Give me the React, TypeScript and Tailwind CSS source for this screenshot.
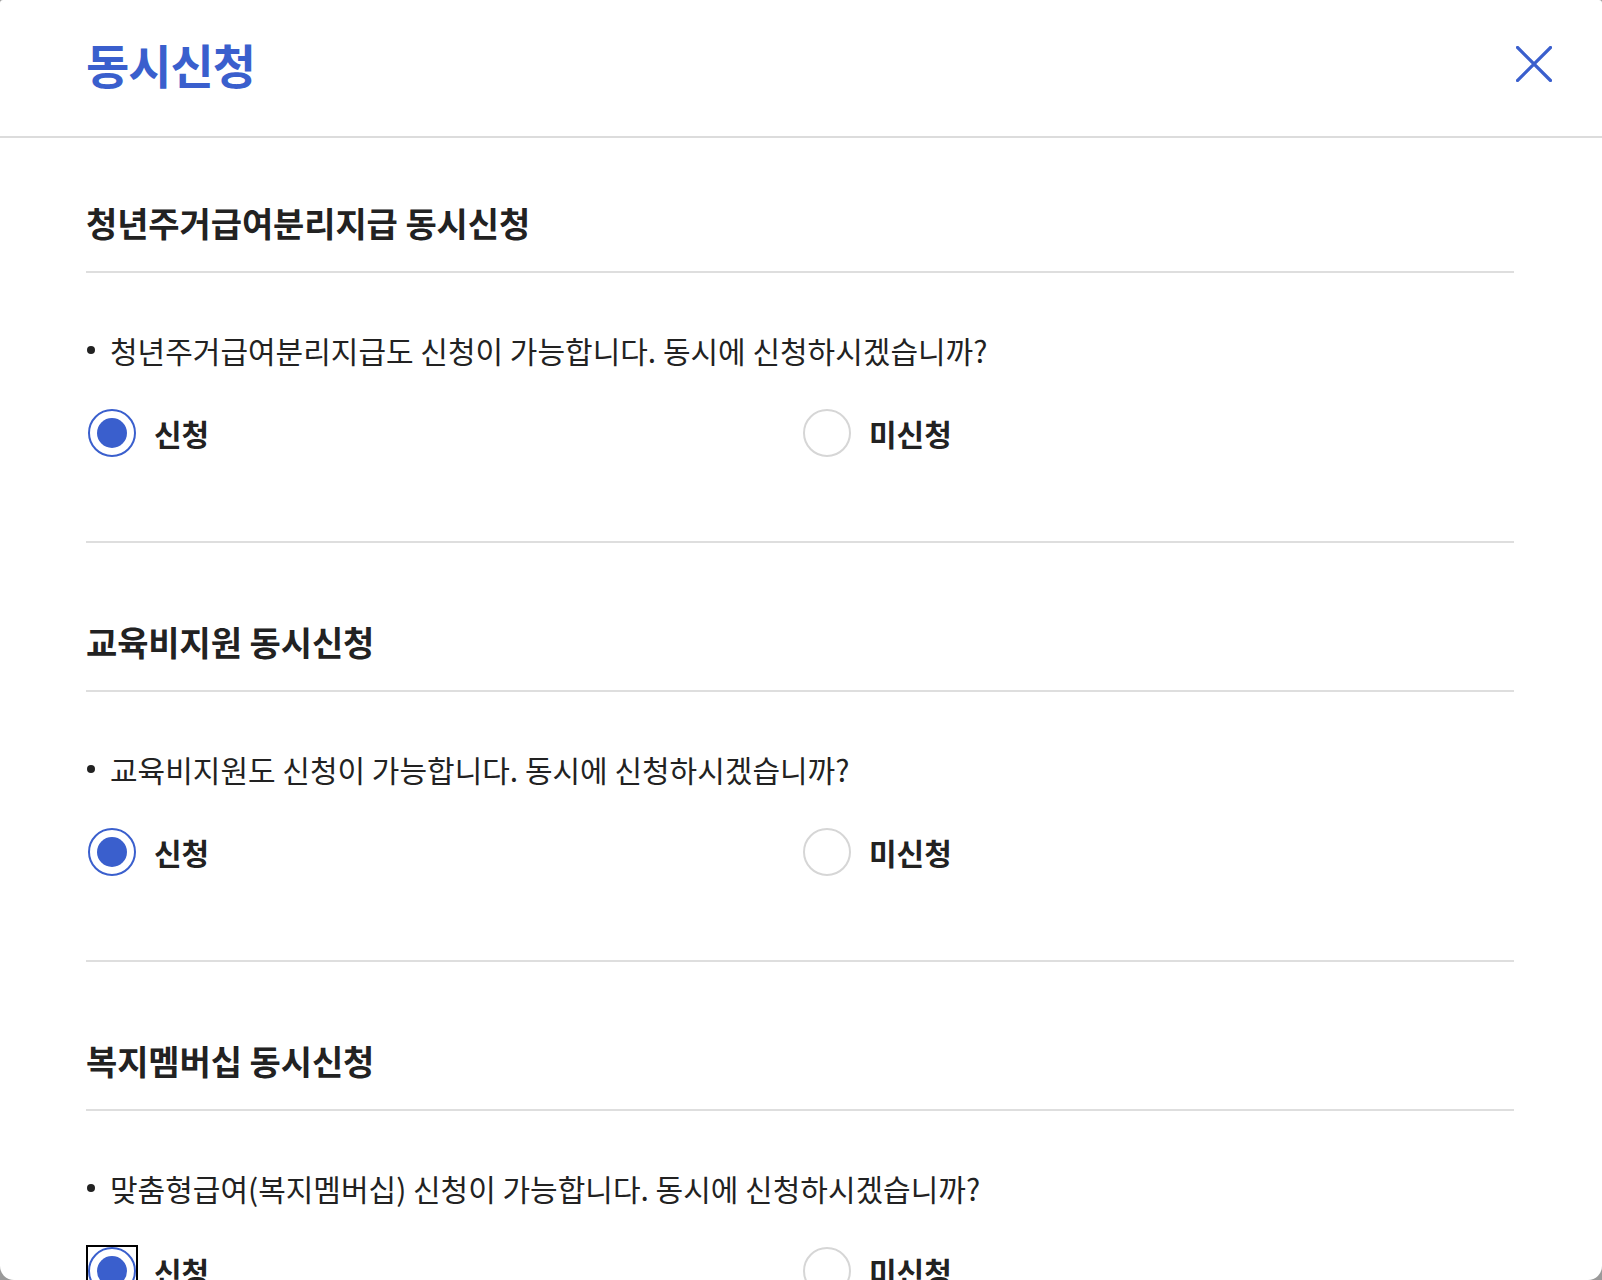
import React from "react";

const FONT = { fontFamily: '"Noto Sans CJK KR", "Noto Sans", sans-serif' };

function Radio({ checked, focused }: { checked: boolean; focused?: boolean }) {
  return (
    <span className="relative inline-flex shrink-0">
      {checked ? (
        <span className="w-[48px] h-[48px] rounded-full border-2 border-[#3a5fcd] flex items-center justify-center bg-white">
          <span className="w-[30px] h-[30px] rounded-full bg-[#3a5fcd]" />
        </span>
      ) : (
        <span className="w-[48px] h-[48px] rounded-full border-2 border-[#d6d6d6] bg-white" />
      )}
      {focused && <span className="absolute -left-[2px] -top-[2px] w-[52px] h-[52px] border-2 border-black" />}
    </span>
  );
}

function Section({
  title,
  desc,
  first,
  focused,
}: {
  title: string;
  desc: string;
  first?: boolean;
  focused?: boolean;
}) {
  return (
    <section className={first ? "pt-[61px]" : "pt-[75px]"}>
      <h2 className="text-[34px] leading-[48px] font-bold text-[#222] tracking-[-0.1px] pb-[24px] border-b-2 border-[#dedede]">
        {title}
      </h2>
      <div className="pb-[84px] border-b-2 border-[#dedede]">
        <p className="mt-[57px] flex items-center text-[30px] leading-[40px] text-[#222] tracking-[0px]">
          <span className="w-[8px] h-[8px] rounded-full bg-[#222] ml-[1px] mr-[15px] shrink-0" />
          {desc}
        </p>
        <div className="mt-[39px] grid grid-cols-2">
          <label className="flex items-center gap-[18px] pl-[2px]">
            <Radio checked focused={focused} />
            <span className="text-[30px] leading-[40px] font-bold text-[#222]">신청</span>
          </label>
          <label className="flex items-center gap-[18px] pl-[3px]">
            <Radio checked={false} />
            <span className="text-[30px] leading-[40px] font-bold text-[#222]">미신청</span>
          </label>
        </div>
      </div>
    </section>
  );
}

export default function App() {
  return (
    <div className="w-[1602px] h-[1280px] bg-[#9a9a9a] overflow-hidden" style={FONT}>
      <div className="h-[1280px] bg-white rounded-t-[3px] rounded-b-[14px] overflow-hidden">
        <header className="h-[138px] flex items-center justify-between pl-[86px] pr-[50px] pb-[8px] border-b-2 border-[#dcdcdc]">
          <h1 className="text-[47px] leading-[60px] font-bold text-[#3a5fcd] tracking-[-1px]">동시신청</h1>
          <button className="w-[36px] h-[36px] flex items-center justify-center" aria-label="닫기">
            <svg width="36" height="36" viewBox="0 0 36 36" fill="none">
              <path d="M1.5 1.5 L34.5 34.5 M34.5 1.5 L1.5 34.5" stroke="#3a5fcd" strokeWidth="3.2" strokeLinecap="square" />
            </svg>
          </button>
        </header>
        <main className="pl-[86px] pr-[88px]">
          <Section
            first
            title="청년주거급여분리지급 동시신청"
            desc="청년주거급여분리지급도 신청이 가능합니다. 동시에 신청하시겠습니까?"
          />
          <Section title="교육비지원 동시신청" desc="교육비지원도 신청이 가능합니다. 동시에 신청하시겠습니까?" />
          <Section
            title="복지멤버십 동시신청"
            desc="맞춤형급여(복지멤버십) 신청이 가능합니다. 동시에 신청하시겠습니까?"
            focused
          />
        </main>
      </div>
    </div>
  );
}
